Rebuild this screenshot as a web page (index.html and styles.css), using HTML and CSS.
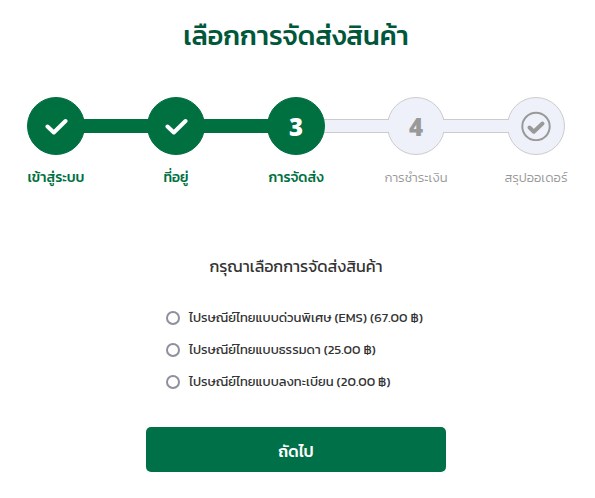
FILE: index.html
```
<!DOCTYPE html>
<html lang="th">
<head>
  <meta charset="UTF-8" />
  <meta name="viewport" content="width=device-width, initial-scale=1" />
  <title>เลือกการจัดส่งสินค้า</title>
  <link rel="stylesheet" href="styles.css">
</head>
<body>

  <main class="checkout">
    <h1 class="page-title">เลือกการจัดส่งสินค้า</h1>

    <!-- Progress steps -->
    <ol class="steps">
      <li class="step done">
        <span class="circle">
          <svg width="24" height="18" viewBox="0 0 24 18" aria-hidden="true">
            <path d="M3.5 9.5 L9.8 15.5 L21.5 4" />
          </svg>
        </span>
        <span class="step-label">เข้าสู่ระบบ</span>
      </li>
      <li class="line done" aria-hidden="true"></li>
      <li class="step done">
        <span class="circle">
          <svg width="24" height="18" viewBox="0 0 24 18" aria-hidden="true">
            <path d="M3.5 9.5 L9.8 15.5 L21.5 4" />
          </svg>
        </span>
        <span class="step-label">ที่อยู่</span>
      </li>
      <li class="line done" aria-hidden="true"></li>
      <li class="step done" aria-current="step">
        <span class="circle">3</span>
        <span class="step-label">การจัดส่ง</span>
      </li>
      <li class="line" aria-hidden="true"></li>
      <li class="step">
        <span class="circle">4</span>
        <span class="step-label">การชำระเงิน</span>
      </li>
      <li class="line" aria-hidden="true"></li>
      <li class="step">
        <span class="circle">
          <svg width="30" height="30" viewBox="0 0 30 30" aria-hidden="true">
            <circle cx="15" cy="15.5" r="13.7" />
            <path d="M8.5 16.5 L12.8 20.7 L21.5 12.5" />
          </svg>
        </span>
        <span class="step-label">สรุปออเดอร์</span>
      </li>
    </ol>

    <!-- Shipping options -->
    <form class="shipping">
      <h2 class="shipping-title">กรุณาเลือกการจัดส่งสินค้า</h2>
      <div class="options">
        <label class="option" for="ems">
          <input type="radio" id="ems" name="shipping" value="ems">
          ไปรษณีย์ไทยแบบด่วนพิเศษ (EMS) (67.00 ฿)
        </label>
        <label class="option" for="normal">
          <input type="radio" id="normal" name="shipping" value="normal">
          ไปรษณีย์ไทยแบบธรรมดา (25.00 ฿)
        </label>
        <label class="option" for="registered">
          <input type="radio" id="registered" name="shipping" value="registered">
          ไปรษณีย์ไทยแบบลงทะเบียน (20.00 ฿)
        </label>
      </div>
      <button class="next" type="button">ถัดไป</button>
    </form>
  </main>

</body>
</html>
```
FILE: styles.css
```
body {
  margin: 0;
  background: #fff;
  color: #333;
  font-family: Kanit, Prompt, "Noto Sans Thai", "Noto Sans", sans-serif;
}

.checkout {
  padding: 16px 30px 24px 27px;
}

.page-title {
  margin: 0 0 41px;
  color: #00573a;
  font-size: 27px;
  font-weight: 500;
  line-height: 40px;
  text-align: center;
}

/* Progress steps */
.steps {
  display: flex;
  margin: 0;
  padding: 0;
  list-style: none;
}

.step {
  display: flex;
  flex-direction: column;
  align-items: center;
  gap: 12px;
  width: 58px;
  color: #999;
}

.circle {
  display: flex;
  align-items: center;
  justify-content: center;
  box-sizing: border-box;
  width: 58px;
  height: 58px;
  border: 1px solid #ccc;
  border-radius: 50%;
  background: #eef1f9;
  font-family: "Open Sans", sans-serif;
  font-size: 24px;
  font-weight: 800;
}

.circle svg {
  fill: none;
  stroke: #999;
  stroke-width: 2;
}

.circle path {
  stroke-width: 4;
  stroke-linecap: round;
  stroke-linejoin: round;
}

.step-label {
  font-size: 13px;
  font-weight: 300;
  line-height: 22px;
  white-space: nowrap;
}

/* Bar between two circles, tucked over the grey ones and under the green */
.line {
  position: relative;
  flex: 1;
  box-sizing: border-box;
  height: 14px;
  margin: 22px -2px 0;
  border: solid #ccc;
  border-width: 1px 0;
  background: #eef1f9;
}

.step.done {
  z-index: 1;
  color: #007041;
}

.step.done .step-label {
  font-size: 14px;
  font-weight: 500;
}

.step.done .circle {
  border-color: #007041;
  background: #007041;
  color: #fff;
}

.step.done svg {
  stroke: #fff;
}

.line.done {
  border-color: #007041;
  background: #007041;
}

/* Shipping options */
.shipping {
  max-width: 300px;
  margin: 65px auto 0;
}

.shipping-title {
  margin: 0 0 24px;
  font-size: 16px;
  font-weight: 400;
  line-height: 24px;
  text-align: center;
}

.options {
  padding-left: 20px;
}

.option {
  display: flex;
  align-items: center;
  gap: 9px;
  font-size: 13px;
  line-height: 32px;
  white-space: nowrap;
}

.option input {
  appearance: none;
  box-sizing: border-box;
  width: 14px;
  height: 14px;
  margin: 0;
  border: 2px solid #8f8f9d;
  border-radius: 50%;
  background: #fff;
}

.option input:checked {
  border: 4px solid #007041;
}

.next {
  width: 100%;
  height: 45px;
  margin-top: 29px;
  padding: 2px 0 0;
  border: 0;
  border-radius: 5px;
  background: #007048;
  color: #fff;
  font-family: inherit;
  font-size: 16px;
  font-weight: 500;
  cursor: pointer;
}
```
